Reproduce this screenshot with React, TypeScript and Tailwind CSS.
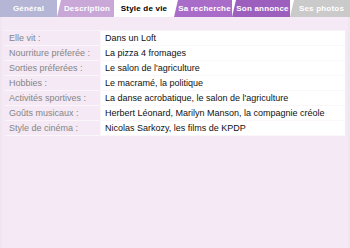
import React from "react";

const tabs = [
  { label: "Général", w: "w-[57px]", cls: "bg-[#b5b5d5] text-white", slant: false },
  { label: "Description", w: "w-[57px]", cls: "bg-[#c9a7d7] text-white", slant: true },
  { label: "Style de vie", w: "w-[60px]", cls: "bg-white text-black", slant: false },
  { label: "Sa recherche", w: "w-[58px]", cls: "bg-[#a96dc9] text-white", slant: true },
  { label: "Son annonce", w: "w-[58px]", cls: "bg-[#9c5fbe] text-white", slant: true },
  { label: "Ses photos", w: "w-[60px]", cls: "bg-[#cacaca] text-white", slant: true },
];

const rows = [
  ["Elle vit :", "Dans un Loft"],
  ["Nourriture préferée :", "La pizza 4 fromages"],
  ["Sorties préferées :", "Le salon de l'agriculture"],
  ["Hobbies :", "Le macramé, la politique"],
  ["Activités sportives :", "La danse acrobatique, le salon de l'agriculture"],
  ["Goûts musicaux :", "Herbert Léonard, Marilyn Manson, la compagnie créole"],
  ["Style de cinéma :", "Nicolas Sarkozy, les films de KPDP"],
];

export default function App() {
  return (
    <div className="w-[350px] h-[248px] bg-white overflow-hidden">
      {/* Tabs */}
      <div className="flex h-[17px] font-['Liberation_Sans',sans-serif] text-[8px] font-bold tracking-[0.2px]">
        {tabs.map((t) => (
          <div
            key={t.label}
            className={`${t.w} ${t.cls} flex items-center justify-center whitespace-nowrap ${
              t.slant ? "pl-[3px] [clip-path:polygon(4px_0,100%_0,100%_100%,0_100%)]" : ""
            }`}
          >
            {t.label}
          </div>
        ))}
      </div>

      {/* Content */}
      <div className="h-[231px] bg-[#f4e9f4] border-x-2 border-[#efe6f0] pt-[13px] px-[3px]">
        <div className="border-t border-[#f8f3f8]">
          {rows.map(([k, v]) => (
            <div key={k} className="flex h-[15px] border-b border-[#faf6fa] font-['Liberation_Sans',sans-serif] leading-[14px]">
              <div className="w-[96px] pl-[4px] text-[9px] text-[#858585] bg-[#f4e9f4] border-r border-[#faf6fa] whitespace-nowrap">{k}</div>
              <div className="flex-1 pl-[4px] text-[9px] bg-white text-[#111] whitespace-nowrap">{v}</div>
            </div>
          ))}
        </div>
      </div>
    </div>
  );
}
